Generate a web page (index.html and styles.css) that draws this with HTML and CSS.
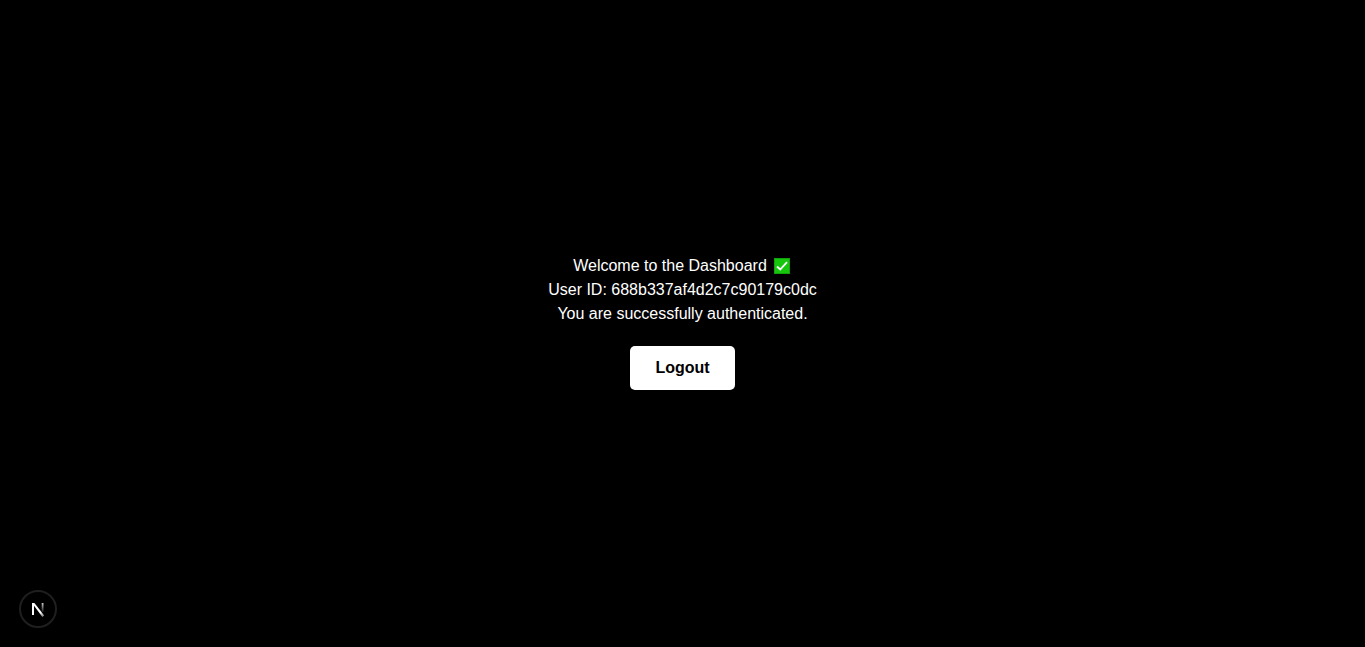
FILE: index.html
```
<!DOCTYPE html>
<html lang="en">
<head>
  <meta charset="utf-8">
  <meta name="viewport" content="width=device-width, initial-scale=1">
  <title>Dashboard</title>
  <link rel="stylesheet" href="styles.css">
</head>
<body>
  <main class="dashboard">
    <div class="message">
      <p class="line welcome">Welcome to the Dashboard
        <svg class="check" viewBox="0 0 16 16" role="img" aria-label="Check mark">
          <rect width="16" height="16" fill="#13a10e"/>
          <rect x="1" y="1" width="14" height="14" fill="#16c60c"/>
          <path d="M3 8.5 6.2 11.5 13 4.2" fill="none" stroke="#fff" stroke-width="1.8"/>
        </svg>
      </p>
      <p class="line">User ID: 688b337af4d2c7c90179c0dc</p>
      <p class="line">You are successfully authenticated.</p>
    </div>
    <button class="logout" type="button">Logout</button>
  </main>
  <button class="dev-badge" type="button" aria-label="Open developer tools">
    <svg class="dev-logo" viewBox="0 0 34 34" fill="none" aria-hidden="true">
      <defs>
        <linearGradient id="diagonal" x1="18" y1="18" x2="24" y2="25" gradientUnits="userSpaceOnUse">
          <stop offset="0.3" stop-color="#fff"/>
          <stop offset="1" stop-color="#fff" stop-opacity="0.3"/>
        </linearGradient>
        <linearGradient id="stem" x1="22" y1="11" x2="22" y2="20" gradientUnits="userSpaceOnUse">
          <stop offset="0" stop-color="#fff" stop-opacity="0.8"/>
          <stop offset="1" stop-color="#fff" stop-opacity="0.1"/>
        </linearGradient>
      </defs>
      <path d="M12 23V11" stroke="#fff" stroke-width="2"/>
      <path d="M11 11H13.4L23.2 23.6 21.4 25Z" fill="url(#diagonal)"/>
      <path d="M21.6 11V20" stroke="url(#stem)" stroke-width="1.8"/>
    </svg>
  </button>
</body>
</html>
```
FILE: styles.css
```
* {
  box-sizing: border-box;
}

body {
  margin: 0;
  background: #000;
  color: #fff;
  font-family: Arial, "Liberation Sans", Helvetica, sans-serif;
  font-size: 16px;
  line-height: 24px;
}

.dashboard {
  min-height: 100vh;
  padding-bottom: 3px;
  display: flex;
  flex-direction: column;
  align-items: center;
  justify-content: center;
  gap: 20px;
}

.message {
  text-align: center;
}

.line {
  margin: 0;
}

.welcome {
  display: flex;
  align-items: center;
  justify-content: center;
  gap: 7px;
  padding-right: 2px;
}

.check {
  width: 16px;
  height: 16px;
}

.logout {
  padding: 10px 25px;
  border: 0;
  border-radius: 5px;
  background: #fff;
  color: #000;
  font: inherit;
  font-weight: 700;
  cursor: pointer;
}

.dev-badge {
  position: fixed;
  left: 19px;
  bottom: 19px;
  width: 38px;
  height: 38px;
  padding: 0;
  border: 2px solid #1f1f1f;
  border-radius: 50%;
  background: #000;
  cursor: pointer;
}

.dev-logo {
  display: block;
  width: 34px;
  height: 34px;
}
```
